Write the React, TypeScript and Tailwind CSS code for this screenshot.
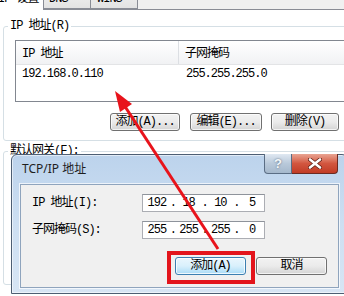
import React from 'react';

const WinButton: React.FC<{ label: string; w: string; primary?: boolean }> = ({ label, w, primary }) => (
  <div
    className={`${w} h-[18px] rounded-[3px] border flex items-center justify-center leading-none ${
      primary
        ? 'border-[#3c7fb1] bg-gradient-to-b from-[#eaf6fd] via-[#d9f0fc] to-[#a9dbf6] shadow-[inset_0_0_0_1px_rgba(255,255,255,0.8)]'
        : 'border-[#707070] bg-gradient-to-b from-[#f2f2f2] via-[#ebebeb] to-[#d4d4d4] shadow-[inset_0_0_0_1px_rgba(255,255,255,0.7)]'
    }`}
  >
    {label}
  </div>
);

const IpField: React.FC<{ parts: string[] }> = ({ parts }) => (
  <div className="w-[123px] h-[18px] border border-[#abadb3] border-t-[#8e939b] bg-white flex items-center pl-[2px]">
    {parts.map((p, i) => (
      <React.Fragment key={i}>
        {i > 0 && <span className="w-[8px] text-center">.</span>}
        <span className="w-[24px] text-center">{p}</span>
      </React.Fragment>
    ))}
  </div>
);

export default function App() {
  return (
    <div className="relative w-[344px] h-[296px] overflow-hidden bg-[#f0f0f0] text-black text-[12px] tracking-[-1px] font-['Liberation_Mono','Noto_Sans_CJK_SC',monospace]">
      {/* tab strip, mostly cut off at the top */}
      <div className="flex items-end h-[9px]">
        <div className="relative z-10 -ml-[12px] w-[56px] h-[23px] -mb-px border border-b-0 border-[#898c95] bg-white flex items-end pl-[9px] pb-[5px] leading-[12px]">
          IP 设置
        </div>
        <div className="w-[47px] h-[22px] border border-l-0 border-[#898c95] bg-gradient-to-b from-[#f2f2f2] to-[#e3e3e3] flex items-end pl-[5px] pb-[3px] leading-[12px]">
          DNS
        </div>
        <div className="w-[47px] h-[22px] border border-l-0 border-[#898c95] bg-gradient-to-b from-[#f2f2f2] to-[#e3e3e3] flex items-end pl-[6px] pb-[3px] leading-[12px]">
          WINS
        </div>
      </div>

      {/* tab page */}
      <div className="h-[287px] border-t border-[#898c95] bg-white pl-[3px] pt-[9px]">
        <fieldset className="-mr-[12px] border border-[#d5dfe5] rounded-[3px] p-0">
          <legend className="ml-[4px] px-[2px] leading-[14px]">IP 地址(R)</legend>
          <div className="pl-[11px] pt-[7px] pb-[9px]">
            <div className="h-[62px] border border-[#828790] bg-white">
              <div className="flex h-[24px] bg-gradient-to-b from-white to-[#f1f2f4] border-b border-[#e3e4e6]">
                <div className="w-[163px] pl-[6px] pt-[2px] flex items-center border-r border-[#dcdfe3]">IP 地址</div>
                <div className="pl-[6px] pt-[2px] flex items-center">子网掩码</div>
              </div>
              <div className="flex h-[17px] items-center">
                <div className="w-[163px] pl-[6px]">192.168.0.110</div>
                <div className="pl-[7px]">255.255.255.0</div>
              </div>
            </div>
            <div className="flex mt-[11px] ml-[95px]">
              <WinButton label="添加(A)..." w="w-[70px]" />
              <div className="ml-[10px]">
                <WinButton label="编辑(E)..." w="w-[72px]" />
              </div>
              <div className="ml-[9px]">
                <WinButton label="删除(V)" w="w-[68px]" />
              </div>
            </div>
          </div>
        </fieldset>

        <fieldset className="-mr-[12px] mt-[3px] h-[141px] border border-[#d5dfe5] rounded-[3px] p-0">
          <legend className="ml-[4px] px-[2px] leading-[14px]">默认网关(F):</legend>
        </fieldset>
      </div>

      {/* TCP/IP dialog window */}
      <div className="absolute left-[11px] top-[154px] w-[337px] h-[140px] rounded-t-[6px] border border-[#4d5e73] bg-gradient-to-b from-[#bcd3ec] via-[#cddff2] to-[#d7e5f4] shadow-[inset_0_0_0_1px_rgba(255,255,255,0.55)]">
        <div className="h-[29px] pl-[10px] pb-[2px] flex items-center tracking-normal font-['Noto_Sans','Noto_Sans_CJK_SC',sans-serif] text-[12px] text-[#1e1e1e]">
          TCP/IP 地址
        </div>
        <div className="absolute top-[-1px] right-[9px] flex">
          <div className="w-[28px] h-[20px] rounded-bl-[4px] border border-t-0 border-[#5a6d84] bg-gradient-to-b from-[#dfe8f2] via-[#b9c9da] to-[#a5b8cc] flex items-center justify-center text-[13px] font-bold text-[#f4f7fa] tracking-normal font-['Liberation_Sans',sans-serif] [text-shadow:0_0_2px_#4b5d73]">
            ?
          </div>
          <div className="w-[46px] h-[20px] rounded-br-[4px] border border-t-0 border-l-0 border-[#6b2a22] bg-gradient-to-b from-[#e8a493] via-[#d2563f] to-[#c13b25] flex items-center justify-center">
            <svg width="14" height="11" viewBox="0 0 14 11">
              <path d="M2 1.5 L12 9.5 M12 1.5 L2 9.5" stroke="#5a1a10" strokeWidth="4" strokeLinecap="round" />
              <path d="M2 1.5 L12 9.5 M12 1.5 L2 9.5" stroke="#ffffff" strokeWidth="2.6" strokeLinecap="round" />
            </svg>
          </div>
        </div>

        <div className="mx-[8px] w-[319px] h-[104px] border border-[#8fa4bd] bg-[#f0f0f0] shadow-[0_0_0_1px_rgba(255,255,255,0.7)] pt-[9px] pl-[11px] pr-[11px]">
          <div className="flex items-center">
            <div className="w-[110px]">IP 地址(I):</div>
            <IpField parts={['192', '18', '10', '5']} />
          </div>
          <div className="flex items-center mt-[9px]">
            <div className="w-[110px]">子网掩码(S):</div>
            <IpField parts={['255', '255', '255', '0']} />
          </div>
          <div className="flex justify-end gap-[10px] mt-[18px]">
            <WinButton label="添加(A)" w="w-[71px]" primary />
            <WinButton label="取消" w="w-[71px]" />
          </div>
        </div>
      </div>

      {/* red highlight box */}
      <div className="absolute left-[167px] top-[251px] w-[88px] h-[33px] border-4 border-[#e3141b]" />

      {/* red arrow */}
      <svg className="absolute inset-0 pointer-events-none" width="344" height="296" viewBox="0 0 344 296">
        <line x1="124" y1="105" x2="218" y2="249" stroke="#e8131b" strokeWidth="3" />
        <polygon points="115,91 132,104 120,112" fill="#e8131b" />
      </svg>
    </div>
  );
}
